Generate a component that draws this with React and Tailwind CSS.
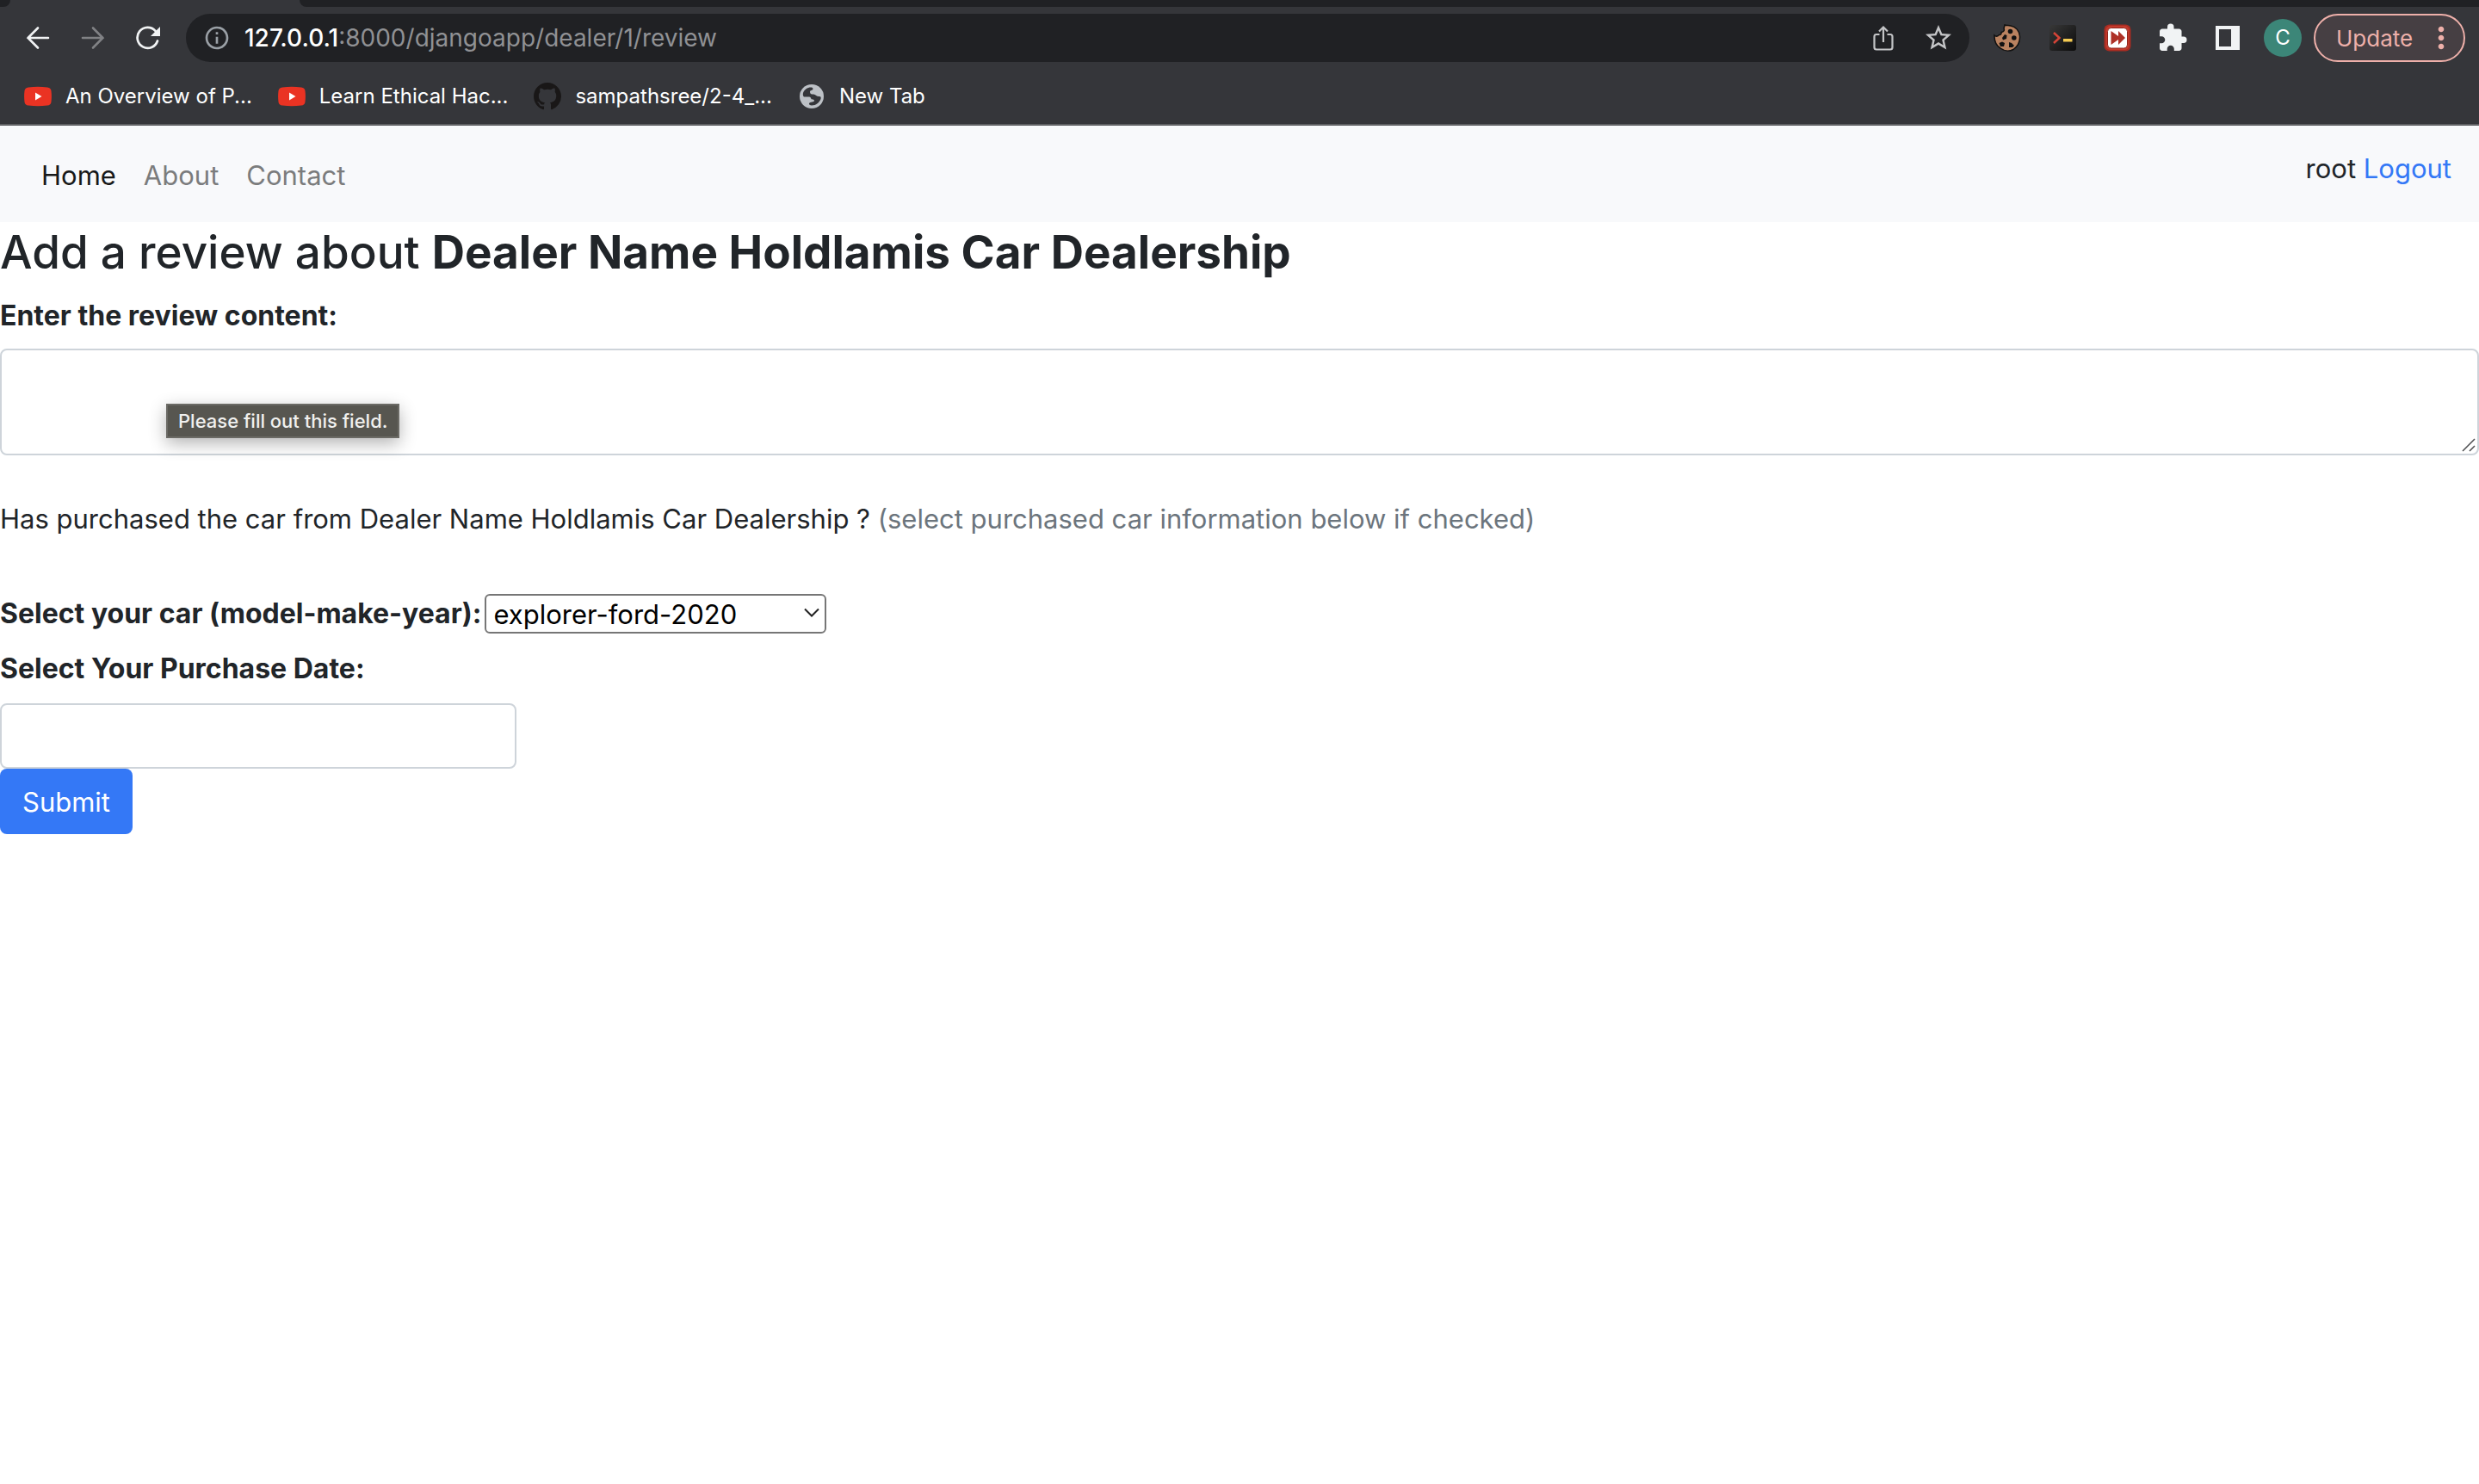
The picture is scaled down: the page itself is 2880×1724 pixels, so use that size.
import React from "react";
import { MdInfoOutline, MdStarOutline, MdExtension, MdMoreVert } from "react-icons/md";

function ArrowIcon({ className }) {
  return (
    <svg viewBox="0 0 28 28" className={className} fill="none" stroke="currentColor" strokeWidth="2.600" strokeLinecap="round" aria-hidden="true">
      <path d="M26 14H2.500M14 2.500L2.500 14L14 25.500" />
    </svg>
  );
}

function ReloadIcon() {
  return (
    <svg viewBox="0 0 28 28" className="size-7 text-[#f1f3f4]" aria-hidden="true">
      <path d="M25 17.500A12 12 0 1 1 22.500 5.800" fill="none" stroke="currentColor" strokeWidth="2.700" strokeLinecap="round" />
      <path d="M28 1V12H17Z" fill="currentColor" />
    </svg>
  );
}

function YouTubeIcon() {
  return (
    <svg viewBox="0 0 32 32" className="size-8" aria-hidden="true">
      <path d="M5 5.4Q16 4.2 27 5.4Q31 5.8 31.5 9.5Q32.3 16 31.5 22.500Q31 26.200 27 26.600Q16 27.800 5 26.600Q1 26.200 .5 22.500Q-.3 16 .5 9.500Q1 5.800 5 5.400Z" fill="#ea3323" />
      <path d="M13 11.500L20.500 16L13 20.500Z" fill="#fff" />
    </svg>
  );
}

function GitHubIcon() {
  return (
    <svg viewBox="0 0 16 16" className="size-8" fill="#191717" aria-hidden="true">
      <path d="M8 0C3.580 0 0 3.580 0 8c0 3.540 2.290 6.530 5.470 7.590.4.07.55-.17.55-.38 0-.19-.01-.82-.01-1.490-2.010.37-2.530-.49-2.690-.94-.09-.23-.48-.94-.82-1.130-.28-.15-.68-.52-.01-.53.63-.01 1.080.58 1.230.82.72 1.210 1.870.87 2.330.66.07-.52.28-.87.51-1.070-1.780-.2-3.640-.89-3.640-3.950 0-.87.31-1.590.82-2.150-.08-.2-.36-1.020.08-2.120 0 0 .67-.21 2.200.82.64-.18 1.320-.27 2-.27s1.360.09 2 .27c1.530-1.040 2.200-.82 2.200-.82.44 1.100.16 1.920.08 2.120.51.56.82 1.270.82 2.150 0 3.070-1.870 3.750-3.650 3.950.29.25.54.73.54 1.480 0 1.070-.01 1.930-.01 2.200 0 .21.15.46.55.38A8.010 8.010 0 0 0 16 8c0-4.420-3.580-8-8-8Z" />
    </svg>
  );
}

function GlobeIcon() {
  return (
    <svg viewBox="0 0 28 28" className="mx-0.5 size-7" aria-hidden="true">
      <circle cx="14" cy="14" r="14" fill="#bdc1c6" />
      <path d="M13 3.500C9 3.500 5.500 6 4 10C3.500 12 4 14 5 14.500H11C13 14.500 13 16 13.500 17C14 18 17 17 17 19C17 21 12 20 11 22C10.500 23.500 12 24.500 14 24.500C19 24.500 23 21 24.500 17C25 15 24.500 14 23 14C20 14.500 19 12 16 11.500C13 11.500 12 11 12 8.500C12 7 15 7 15.500 5.500C15.500 4 14.500 3.500 13 3.500Z" fill="#35363a" />
    </svg>
  );
}

function ShareIcon() {
  return (
    <svg viewBox="0 0 24 30" className="h-[30px] w-6" fill="none" stroke="#c4c5c7" strokeWidth="2.200" aria-hidden="true">
      <path d="M7.500 11H4Q1.500 11 1.500 13.500V26Q1.500 28.500 4 28.500H20Q22.500 28.500 22.500 26V13.500Q22.500 11 20 11H16.500M12 20V2.500M7 7.500L12 2.500L17 7.500" />
    </svg>
  );
}

function CookieIcon() {
  return (
    <svg viewBox="0 0 32 32" className="size-8" aria-hidden="true">
      <path d="M13 1C15 2 18 .8 20 2C26 3 30 8 30.500 14C31 21 28 26 23 29.500C18 32 12 31 8 28C3 25 .8 20 1 13C3 15 5 14 6.500 12.500C8 13 9.500 11 9 9.500C12 9 13 7 12 5Z" fill="#b98260" stroke="#111" strokeWidth="1.500" />
      <g fill="#111">
        <circle cx="19.500" cy="8.500" r="2.800" />
        <path d="M10 16L13 12L15.500 13L15 17L11 18.500Z" />
        <circle cx="23.800" cy="16" r="2.800" />
        <path d="M6.500 22L10 20.500L13 22L12 26L8 26Z" />
        <path d="M18 21L21 22L24 25L22 27H18Z" />
      </g>
    </svg>
  );
}

function TerminalIcon() {
  return (
    <svg viewBox="0 0 32 32" className="size-8" aria-hidden="true">
      <defs>
        <linearGradient id="term" x1="0" y1="0" x2="1" y2="1">
          <stop offset="0" stopColor="#383838" />
          <stop offset="1" stopColor="#0c0c0c" />
        </linearGradient>
      </defs>
      <rect x="1" y="1" width="31" height="30" rx="3" fill="url(#term)" />
      <path d="M6 10L12.500 16L6 22" fill="none" stroke="#d64437" strokeWidth="2.500" />
      <rect x="17" y="17" width="10.500" height="3.500" fill="#f5cb52" />
    </svg>
  );
}

function FastForwardIcon() {
  return (
    <svg viewBox="0 0 32 32" className="size-8" aria-hidden="true">
      <rect x=".5" y=".5" width="31" height="31" rx="6" fill="#a82c22" />
      <rect x="2.500" y="2" width="27" height="28" rx="5" fill="#c43a2c" />
      <rect x="4.500" y="4.500" width="23" height="23.500" rx="4" fill="#fff" stroke="#8f261d" strokeWidth="1" />
      <path d="M8.500 8L17 14V8L25 16L17 24V18L8.500 24Z" fill="#ae3127" />
    </svg>
  );
}

function SidePanelIcon() {
  return (
    <svg viewBox="0 0 28 28" className="size-7" aria-hidden="true">
      <path fillRule="evenodd" d="M0 0H28V28H0ZM4 4V24H18V4Z" fill="#f1f3f4" />
    </svg>
  );
}

const iconButton = "flex h-10 w-16 shrink-0 items-center justify-center";

function Bookmark({ icon, children }) {
  return (
    <a href="#" className="flex items-center gap-4">
      {icon}
      <span>{children}</span>
    </a>
  );
}

function BrowserBar() {
  return (
    <header className="border-b-2 border-[#5f6063] bg-[#35363a] text-white">
      <div className="flex h-2 justify-between">
        <div className="w-3 rounded-br-lg bg-[#202124]" />
        <div className="ml-[336px] flex-1 rounded-bl-lg bg-[#202124]" />
      </div>
      <div className="flex h-[72px] items-center pr-4 pl-3">
        <button type="button" aria-label="Back" className={iconButton}><ArrowIcon className="size-7 text-[#f1f3f4]" /></button>
        <button type="button" aria-label="Forward" className={iconButton}><ArrowIcon className="size-7 rotate-180 text-[#818285]" /></button>
        <button type="button" aria-label="Reload" className={iconButton}><ReloadIcon /></button>
        <div className="ml-3 flex h-14 flex-1 items-center rounded-full bg-[#202124] pr-1 pl-5">
          <MdInfoOutline className="size-8 text-[#9aa0a6]" />
          <div className="ml-4 flex-1 text-[28px] leading-10 text-[#909194]">
            <span className="font-medium text-white">127.0.0.1</span>:8000/djangoapp/dealer/1/review
          </div>
          <button type="button" aria-label="Share this page" className={iconButton}><ShareIcon /></button>
          <button type="button" aria-label="Bookmark this page" className={iconButton}><MdStarOutline className="size-9 text-[#c4c5c7]" /></button>
        </div>
        <div className="ml-3 flex items-center">
          <button type="button" aria-label="Cookies" className={iconButton}><CookieIcon /></button>
          <button type="button" aria-label="Terminal" className={iconButton}><TerminalIcon /></button>
          <button type="button" aria-label="Fast forward" className={iconButton}><FastForwardIcon /></button>
          <button type="button" aria-label="Extensions" className={iconButton}><MdExtension className="size-9 text-[#f1f3f4]" /></button>
          <button type="button" aria-label="Side panel" className={iconButton}><SidePanelIcon /></button>
          <button type="button" aria-label="Profile" className={iconButton}>
            <span className="flex size-11 items-center justify-center rounded-full bg-[#3c8678] text-2xl">C</span>
          </button>
        </div>
        <button type="button" className="ml-1 flex h-14 w-44 items-center justify-between rounded-full border-2 border-[#eeb0aa] bg-[#463f43] pr-1.5 pl-6 text-[26px] text-[#eeb0aa]">
          Update
          <MdMoreVert className="size-10" />
        </button>
      </div>
      <nav aria-label="Bookmarks" className="flex h-16 items-center gap-[30px] px-7 text-2xl">
        <Bookmark icon={<YouTubeIcon />}>An Overview of P...</Bookmark>
        <Bookmark icon={<YouTubeIcon />}>Learn Ethical Hac...</Bookmark>
        <Bookmark icon={<GitHubIcon />}>sampathsree/2-4_...</Bookmark>
        <Bookmark icon={<GlobeIcon />}>New Tab</Bookmark>
      </nav>
    </header>
  );
}

function SiteNav() {
  return (
    <nav className="flex h-28 justify-between bg-[#f8f9fb] px-8 text-[31px] leading-[48px]">
      <div className="flex items-center gap-8 px-4 pt-1 text-[#7b7c7d]">
        <a href="#" className="text-[#181919]">Home</a>
        <a href="#">About</a>
        <a href="#">Contact</a>
      </div>
      <div className="pt-[26px]">
        root <a href="#" className="text-[#3478f6]">Logout</a>
      </div>
    </nav>
  );
}

function ReviewForm() {
  return (
    <form className="pt-0.5 text-[31px] leading-[48px]" onSubmit={(e) => e.preventDefault()}>
      <h1 className="mb-4 text-[53px] leading-[67px] font-medium">
        Add a review about <b>Dealer Name Holdlamis Car Dealership</b>
      </h1>
      <label htmlFor="content" className="mb-[14px] block text-[32px] font-bold">Enter the review content:</label>
      <div className="relative">
        <textarea id="content" className="block h-[124px] w-full resize-none rounded-lg border-2 border-[#ced4da] px-6 py-3 outline-none" />
        <svg viewBox="0 0 16 16" className="absolute right-1 bottom-1 size-4" stroke="#4c4d50" strokeWidth="1.500" aria-hidden="true">
          <path d="M1 15L15 1M9 15L15 9" />
        </svg>
        <div role="tooltip" className="absolute top-16 left-[193px] flex h-10 items-center border-2 border-[#6b6a65] bg-[#575650] px-3 text-[22px] font-medium text-[#f0f0ee] shadow-[0_6px_20px_rgba(0,0,0,0.3)]">
          Please fill out this field.
        </div>
      </div>
      <p className="mt-[50px]">
        Has purchased the car from Dealer Name Holdlamis Car Dealership ?{" "}
        <span className="text-[#6c757d]">(select purchased car information below if checked)</span>
      </p>
      <div className="mt-[62px] flex items-center gap-1">
        <label htmlFor="car" className="text-[32px] font-bold">Select your car (model-make-year):</label>
        <div className="relative">
          <select id="car" className="block h-[46px] w-[397px] appearance-none rounded-md border-2 border-[#767676] bg-white px-2 pt-0.5 text-[31px] leading-10 text-black">
            <option>explorer-ford-2020</option>
          </select>
          <svg viewBox="0 0 18 12" className="pointer-events-none absolute top-4 right-2 h-3 w-[18px]" fill="none" stroke="#222" strokeWidth="2" aria-hidden="true">
            <path d="M1 1.500L9 9.500L17 1.500" />
          </svg>
        </div>
      </div>
      <label htmlFor="date" className="my-4 block text-[32px] font-bold">Select Your Purchase Date:</label>
      <input id="date" type="text" className="block h-[76px] w-[600px] rounded-lg border-2 border-[#ced4da] px-6 outline-none" />
      <button type="submit" className="block h-[76px] rounded-lg bg-[#3478f6] px-[26px] pt-0.5 text-white">Submit</button>
    </form>
  );
}

export default function App() {
  return (
    <div className="min-h-screen bg-white font-[Inter,sans-serif] text-[#212529]">
      <BrowserBar />
      <SiteNav />
      <ReviewForm />
    </div>
  );
}
